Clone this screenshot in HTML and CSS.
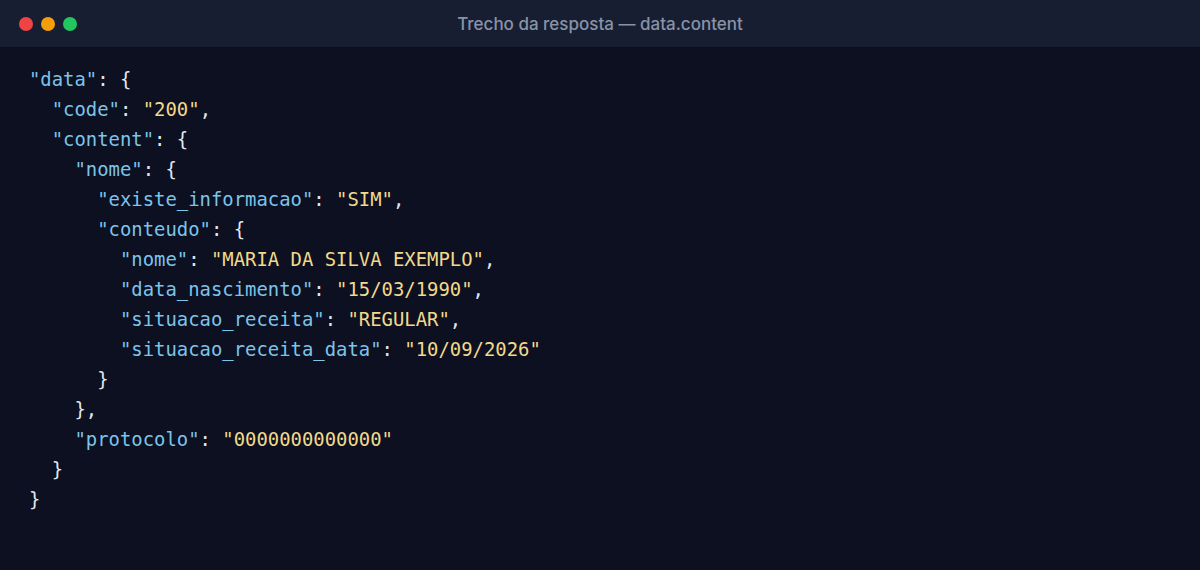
FILE: index.html
```html
<!DOCTYPE html>
<html lang="pt">
<head>
<meta charset="utf-8">
<title>Trecho da resposta</title>
<link rel="stylesheet" href="styles.css">
</head>
<body>
<div class="window">
  <div class="titlebar">
    <div class="dots">
      <span class="dot red"></span>
      <span class="dot yellow"></span>
      <span class="dot green"></span>
    </div>
    <div class="title">Trecho da resposta — data.content</div>
  </div>
  <pre class="code"><span class="k">"data"</span><span class="p">: {</span>
<span class="p">  </span><span class="k">"code"</span><span class="p">: </span><span class="s">"200"</span><span class="p">,</span>
<span class="p">  </span><span class="k">"content"</span><span class="p">: {</span>
<span class="p">    </span><span class="k">"nome"</span><span class="p">: {</span>
<span class="p">      </span><span class="k">"existe_informacao"</span><span class="p">: </span><span class="s">"SIM"</span><span class="p">,</span>
<span class="p">      </span><span class="k">"conteudo"</span><span class="p">: {</span>
<span class="p">        </span><span class="k">"nome"</span><span class="p">: </span><span class="s">"MARIA DA SILVA EXEMPLO"</span><span class="p">,</span>
<span class="p">        </span><span class="k">"data_nascimento"</span><span class="p">: </span><span class="s">"15/03/1990"</span><span class="p">,</span>
<span class="p">        </span><span class="k">"situacao_receita"</span><span class="p">: </span><span class="s">"REGULAR"</span><span class="p">,</span>
<span class="p">        </span><span class="k">"situacao_receita_data"</span><span class="p">: </span><span class="s">"10/09/2026"</span>
<span class="p">      }</span>
<span class="p">    },</span>
<span class="p">    </span><span class="k">"protocolo"</span><span class="p">: </span><span class="s">"0000000000000"</span>
<span class="p">  }</span>
<span class="p">}</span></pre>
</div>
</body>
</html>
```

FILE: styles.css
```css
html, body {
  margin: 0;
  padding: 0;
  background: #0c1020;
}

.window {
  width: 1200px;
  height: 570px;
  background: #0c1020;
  display: flex;
  flex-direction: column;
}

.titlebar {
  height: 47px;
  background: #171e31;
  display: flex;
  align-items: center;
  position: relative;
  flex-shrink: 0;
}

.dots {
  display: flex;
  gap: 8px;
  padding-left: 19px;
  padding-top: 1px;
}

.dot {
  width: 14px;
  height: 14px;
  border-radius: 50%;
  display: block;
}

.red { background: #ef4444; }
.yellow { background: #f59e0b; }
.green { background: #22c55e; }

.title {
  position: absolute;
  left: 0;
  right: 0;
  top: 0;
  bottom: 0;
  display: flex;
  align-items: center;
  justify-content: center;
  font-family: Inter, "Noto Sans", sans-serif;
  font-size: 17px;
  font-weight: 500;
  color: #8893a8;
}

.code {
  margin: 0;
  padding: 17px 0 0 29px;
  font-family: "DejaVu Sans Mono", "Liberation Mono", monospace;
  font-size: 18.9px;
  line-height: 30px;
  color: #e2e8f0;
  white-space: pre;
}

.k { color: #7cc4ea; }
.s { color: #f2d98c; }
.p { color: #e2e8f0; }
```
